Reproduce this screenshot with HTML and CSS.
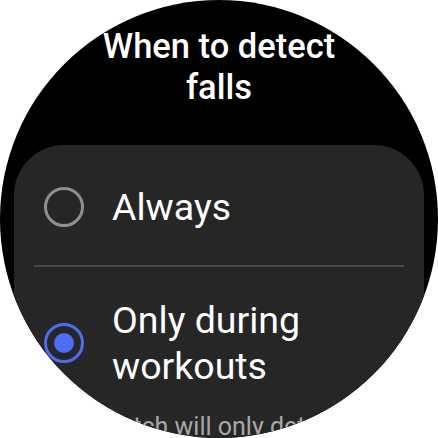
FILE: index.html
```html
<!DOCTYPE html>
<html>
<head>
<meta charset="utf-8">
<link rel="stylesheet" href="styles.css">
</head>
<body>
<div class="screen">
  <h1 class="title">When to detect<br>falls</h1>
  <div class="card">
    <div class="row row-first">
      <span class="radio"></span>
      <span class="label">Always</span>
    </div>
    <div class="divider"></div>
    <div class="row row-second">
      <span class="radio radio-on"><span class="dot"></span></span>
      <span class="label">Only during<br>workouts</span>
    </div>
    <p class="note">Your watch will only detect falls during workouts.</p>
  </div>
</div>
</body>
</html>
```
FILE: styles.css
```css
html, body {
  margin: 0;
  padding: 0;
  background: #ffffff;
}
.screen {
  width: 438px;
  height: 438px;
  border-radius: 50%;
  background: #000000;
  overflow: hidden;
  font-family: Roboto, "Liberation Sans", sans-serif;
}
.title {
  margin: 0;
  padding-top: 26px;
  text-align: center;
  color: #ffffff;
  font-size: 34.5px;
  font-weight: 500;
  line-height: 41px;
}
.card {
  margin: 37px 14px 0;
  background: #262626;
  border-radius: 50px;
  padding-bottom: 40px;
}
.row {
  display: flex;
  align-items: center;
  gap: 28px;
  padding-left: 30px;
}
.row-first {
  height: 120px;
  padding-top: 4px;
  box-sizing: border-box;
}
.row-second {
  padding-top: 30px;
  padding-bottom: 22px;
}
.radio {
  flex: none;
  width: 34px;
  height: 34px;
  border: 3px solid #8f8f8f;
  border-radius: 50%;
  display: flex;
  align-items: center;
  justify-content: center;
}
.radio-on {
  border-color: #4b6cf6;
}
.dot {
  width: 20px;
  height: 20px;
  border-radius: 50%;
  background: #4b6cf6;
}
.label {
  color: #ffffff;
  font-size: 37.5px;
  line-height: 46px;
}
.divider {
  height: 2px;
  margin: 0 20px;
  background: #4a4a4a;
}
.note {
  margin: 0;
  padding: 0 30px;
  color: #a8a8a8;
  font-size: 25px;
  line-height: 32px;
}
```
